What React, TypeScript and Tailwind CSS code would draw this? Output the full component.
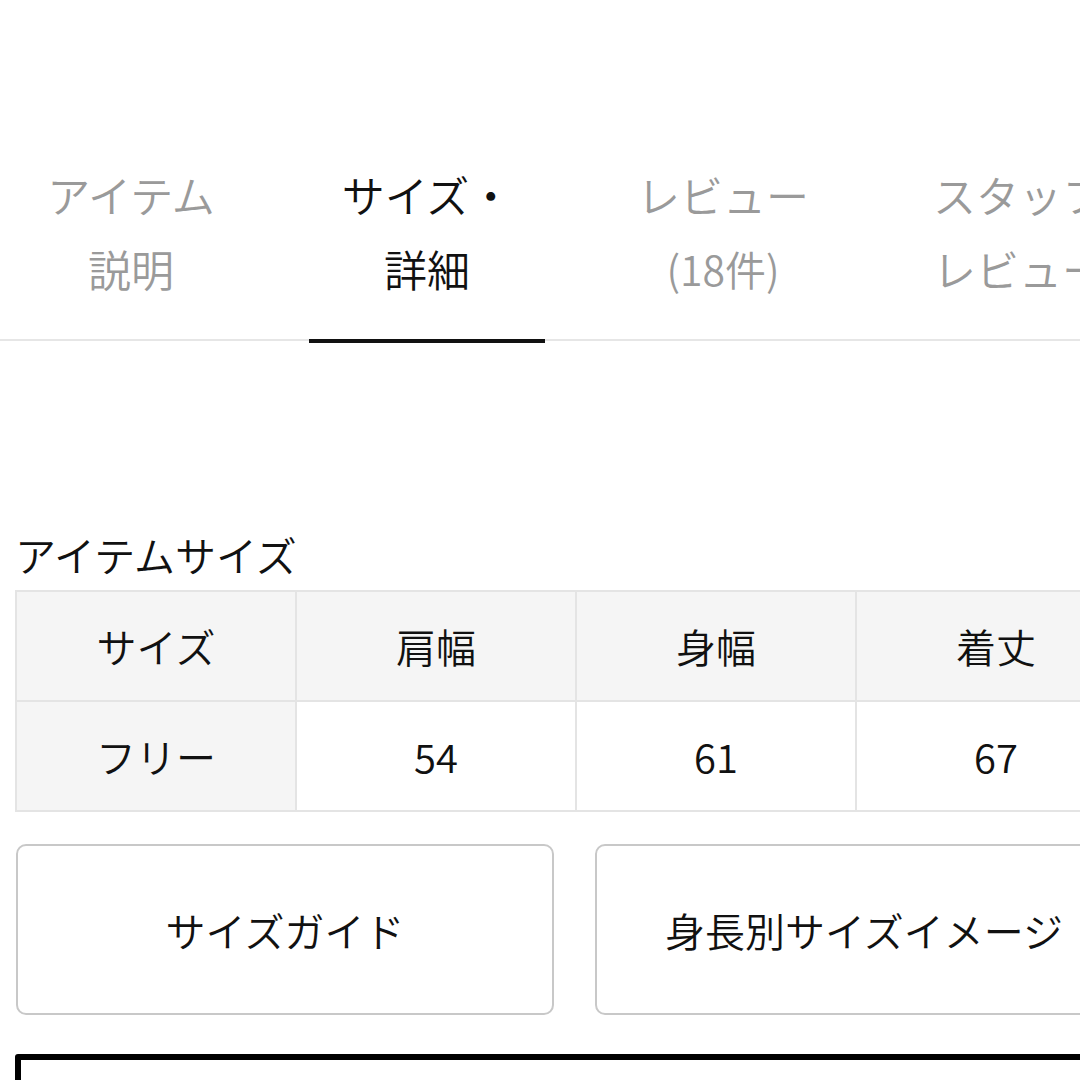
import React from "react";

const tabs = [
  { l1: "アイテム", l2: "説明", active: false },
  { l1: "サイズ・", l2: "詳細", active: true },
  { l1: "レビュー", l2: "(18件)", active: false },
  { l1: "スタッフ", l2: "レビュー", active: false },
];

export default function App() {
  return (
    <div
      className="w-[1080px] h-[1080px] overflow-hidden bg-white font-[350]"
      style={{ fontFamily: '"Noto Sans CJK JP", "Noto Sans", sans-serif' }}
    >
      <div className="w-[1180px]">
        <div className="h-[157px]" />
        <div className="flex border-b-2 border-[#e6e6e6]">
          <div className="flex ml-[-17px]">
            {tabs.map((t, i) => (
              <div
                key={i}
                className={`relative w-[296px] shrink-0 flex flex-col items-center pb-[34px] text-[43px] leading-[74px] whitespace-nowrap ${
                  t.active ? "text-[#111]" : "text-[#9a9a9a]"
                }`}
              >
                <span>{t.l1}</span>
                <span className={i === 2 ? "text-[41px]" : ""}>{t.l2}</span>
                {t.active && (
                  <div className="absolute left-[30px] right-[30px] top-full h-[4px] bg-[#111]" />
                )}
              </div>
            ))}
          </div>
        </div>

        <div className="h-[185px]" />

        <div className="pl-[15px] text-[41px] leading-[56px] text-[#111]">アイテムサイズ</div>

        <div className="ml-[15px] mt-[8px]">
          <table className="border-collapse text-[40px] text-[#111]">
            <tbody>
              <tr className="bg-[#f5f5f5]">
                {["サイズ", "肩幅", "身幅", "着丈"].map((h) => (
                  <td
                    key={h}
                    className="w-[280px] h-[110px] border-2 border-[#e4e4e4] text-center align-middle p-0"
                  >
                    {h}
                  </td>
                ))}
              </tr>
              <tr>
                <td className="w-[280px] h-[110px] border-2 border-[#e4e4e4] bg-[#f5f5f5] text-center align-middle p-0">
                  フリー
                </td>
                {["54", "61", "67"].map((v) => (
                  <td
                    key={v}
                    className="w-[280px] h-[110px] border-2 border-[#e4e4e4] bg-white text-center align-middle p-0"
                  >
                    {v}
                  </td>
                ))}
              </tr>
            </tbody>
          </table>
        </div>

        <div className="flex gap-[41px] ml-[16px] mt-[32px]">
          <div className="w-[538px] h-[171px] shrink-0 rounded-[10px] border-2 border-[#c8c8c8] flex items-center justify-center text-[40px] text-[#111]">
            サイズガイド
          </div>
          <div className="w-[538px] h-[171px] shrink-0 rounded-[10px] border-2 border-[#c8c8c8] flex items-center justify-center text-[40px] text-[#111] whitespace-nowrap">
            身長別サイズイメージ
          </div>
        </div>

        <div className="ml-[15px] mt-[39px] w-[1140px] h-[120px] border-[6px] border-black rounded-[3px]" />
      </div>
    </div>
  );
}
